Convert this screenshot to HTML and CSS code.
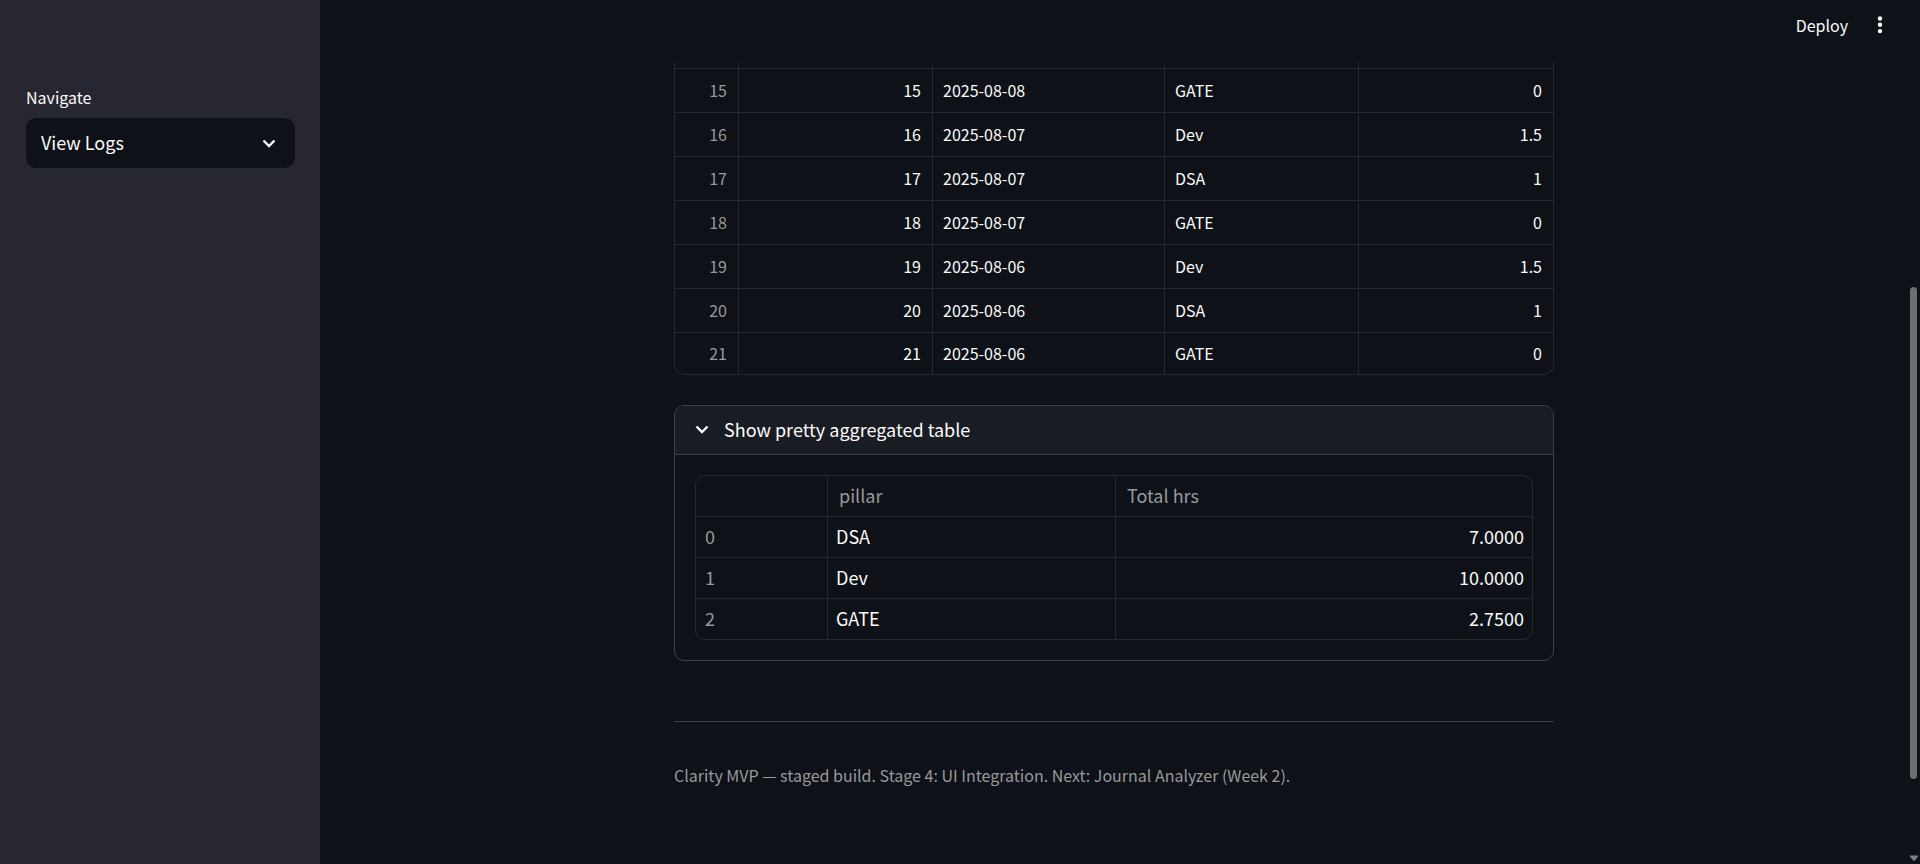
FILE: index.html
```html
<!DOCTYPE html>
<html lang="en">
<head>
<meta charset="utf-8">
<meta name="viewport" content="width=device-width, initial-scale=1">
<title>Clarity MVP</title>
<link rel="stylesheet" href="styles.css">
</head>
<body>
<div class="app">
  <aside class="sidebar">
    <label class="field-label" for="nav">Navigate</label>
    <div class="select">
      <select id="nav"><option>View Logs</option></select>
      <svg class="chevron" viewBox="0 0 14 9" aria-hidden="true"><path d="M1.500 1.500 7 7l5.500-5.500"/></svg>
    </div>
  </aside>

  <div class="view">
    <header class="toolbar">
      <button class="deploy" type="button">Deploy</button>
      <button class="menu" type="button" aria-label="Main menu">
        <svg viewBox="0 0 6 18" aria-hidden="true"><circle cx="3" cy="2.500" r="2.200"/><circle cx="3" cy="8.800" r="2.200"/><circle cx="3" cy="15.100" r="2.200"/></svg>
      </button>
    </header>

    <main class="content">
      <div class="frame frame-scrolled">
        <table class="logs">
          <colgroup><col class="c-index"><col class="c-id"><col class="c-date"><col class="c-pillar"><col class="c-hours"></colgroup>
          <tbody>
            <tr class="cut"><td></td><td></td><td></td><td></td><td></td></tr>
            <tr><th scope="row">15</th><td class="num">15</td><td>2025-08-08</td><td>GATE</td><td class="num">0</td></tr>
            <tr><th scope="row">16</th><td class="num">16</td><td>2025-08-07</td><td>Dev</td><td class="num">1.5</td></tr>
            <tr><th scope="row">17</th><td class="num">17</td><td>2025-08-07</td><td>DSA</td><td class="num">1</td></tr>
            <tr><th scope="row">18</th><td class="num">18</td><td>2025-08-07</td><td>GATE</td><td class="num">0</td></tr>
            <tr><th scope="row">19</th><td class="num">19</td><td>2025-08-06</td><td>Dev</td><td class="num">1.5</td></tr>
            <tr><th scope="row">20</th><td class="num">20</td><td>2025-08-06</td><td>DSA</td><td class="num">1</td></tr>
            <tr class="last"><th scope="row">21</th><td class="num">21</td><td>2025-08-06</td><td>GATE</td><td class="num">0</td></tr>
          </tbody>
        </table>
      </div>

      <details class="expander" open>
        <summary>
          <svg class="chevron" viewBox="0 0 14 9" aria-hidden="true"><path d="M1.500 1.500 7 7l5.500-5.500"/></svg>
          <span class="expander-title">Show pretty aggregated table</span>
        </summary>
        <div class="expander-body">
          <div class="frame">
            <table class="totals">
              <colgroup><col class="t-index"><col class="t-pillar"><col class="t-total"></colgroup>
              <thead><tr><td></td><th scope="col">pillar</th><th scope="col">Total hrs</th></tr></thead>
              <tbody>
                <tr><th scope="row">0</th><td>DSA</td><td class="num">7.0000</td></tr>
                <tr><th scope="row">1</th><td>Dev</td><td class="num">10.0000</td></tr>
                <tr><th scope="row">2</th><td>GATE</td><td class="num">2.7500</td></tr>
              </tbody>
            </table>
          </div>
        </div>
      </details>

      <hr class="rule">
      <p class="caption">Clarity MVP — staged build. Stage 4: UI Integration. Next: Journal Analyzer (Week 2).</p>
    </main>
  </div>

  <div class="scrollbar" aria-hidden="true">
    <div class="thumb"></div>
    <svg class="arrow" viewBox="0 0 10 7"><path d="M1.500.500h7q1 0 .500 1L5.800 5.500q-.800.900-1.600 0L1 1.500q-.500-1 .500-1Z"/></svg>
  </div>
</div>
</body>
</html>
```

FILE: styles.css
```css
:root {
  --bg: #0e1117;
  --panel: #262730;
  --text: #fafafa;
  --muted: #98999b;
  --line: #26282d;
  --line-strong: #3d4045;
}

* { box-sizing: border-box; }

body {
  margin: 0;
  background: var(--bg);
  color: var(--text);
  font-family: "Noto Sans CJK SC", "Open Sans", sans-serif;
  font-size: 18px;
  line-height: 24px;
}

button, select { font: inherit; color: inherit; }

.app {
  display: grid;
  grid-template-columns: 320px minmax(0, 1fr) 12px;
  height: 100vh;
  overflow: hidden;
}

.sidebar {
  background: var(--panel);
  padding: 85px 25px 0 26px;
}

.field-label {
  display: block;
  font-size: 16px;
  margin-bottom: 9px;
}

.select { display: grid; align-items: center; }

.select select {
  grid-area: 1 / 1;
  width: 100%;
  height: 50px;
  padding: 0 48px 2px 15px;
  border: 0;
  border-radius: 10px;
  background: var(--bg);
  appearance: none;
}

.chevron {
  width: 14px;
  height: 9px;
  fill: none;
  stroke: var(--text);
  stroke-width: 2.4;
}

.select .chevron {
  grid-area: 1 / 1;
  justify-self: end;
  margin-right: 19px;
  pointer-events: none;
}

.view { display: flex; flex-direction: column; min-width: 0; }

.toolbar {
  display: flex;
  flex: none;
  justify-content: flex-end;
  gap: 29px;
  height: 63px;
  padding: 13px 25px 0 0;
}

.toolbar button {
  height: 24px;
  padding: 0;
  border: 0;
  background: none;
}

.toolbar .deploy { font-size: 16px; }

.menu svg {
  display: block;
  width: 6px;
  height: 18px;
  fill: var(--text);
}

.content {
  width: 100%;
  max-width: 880px;
  margin: 0 auto;
}

.frame {
  border: 1px solid var(--line);
  border-radius: 10px;
  overflow: hidden;
}

.frame-scrolled {
  border-top: 0;
  border-radius: 0 0 10px 10px;
}

table {
  width: 100%;
  border-collapse: separate;
  border-spacing: 0;
  table-layout: fixed;
}

th, td {
  border: 0 solid var(--line);
  border-right-width: 1px;
  border-bottom-width: 1px;
  text-align: left;
  font-weight: 400;
}

th { color: var(--muted); }
tr > :last-child { border-right-width: 0; }
tbody tr:last-child > * { border-bottom-width: 0; }
.num { text-align: right; }

.logs { font-size: 16px; }
.logs th, .logs td { height: 44px; padding: 0 11px 2px 10px; }
.logs th { text-align: right; }
.logs .cut td { height: 6px; }
.logs .last > * { height: 41px; }

.c-index { width: 64px; }
.c-id, .c-pillar { width: 194px; }
.c-date { width: 232px; }

.totals th, .totals td { height: 41px; padding: 0 8px 3px; }
.totals thead th { padding: 0 11px 3px; }
.totals tbody th { padding: 0 9px 3px; }
.totals tbody tr:last-child > * { height: 40px; }
.t-index { width: 132px; }
.t-pillar { width: 288px; }

.expander {
  margin-top: 30px;
  border: 1px solid var(--line-strong);
  border-radius: 10px;
  overflow: hidden;
}

.expander summary {
  display: flex;
  align-items: center;
  gap: 15px;
  height: 48px;
  padding: 0 20px 1px;
  background: #1a1c24;
  list-style: none;
  cursor: pointer;
}

.expander-title { padding-bottom: 2px; }

.expander-body {
  padding: 20px;
  border-top: 1px solid var(--line-strong);
}

.rule {
  margin: 60px 0 41px;
  border: 0;
  border-top: 1px solid var(--line-strong);
}

.caption {
  margin: 0;
  color: var(--muted);
  font-size: 16px;
}

.scrollbar {
  display: flex;
  flex-direction: column;
  align-items: center;
  justify-content: space-between;
  padding: 287px 1px 2px 0;
}

.thumb {
  width: 7px;
  height: 57vh;
  border-radius: 4px;
  background: #6d6e72;
}

.arrow { width: 10px; height: 7px; fill: #7c7d80; }
```
